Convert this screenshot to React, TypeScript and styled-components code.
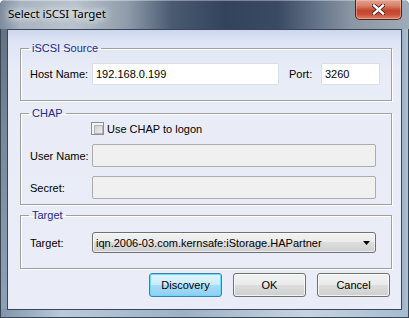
import React from "react";
import styled, { createGlobalStyle } from "styled-components";

const GlobalStyle = createGlobalStyle`
  html, body { margin: 0; padding: 0; background: #ffffff; }
  * { box-sizing: border-box; }
`;

const Window = styled.div`
  width: 409px;
  height: 318px;
  display: flex;
  flex-direction: column;
  border-radius: 5px 5px 0 0;
  overflow: hidden;
  box-shadow: inset 0 0 0 1px #3a4553;
  background:
    linear-gradient(90deg, #7f93a8, #b9cadb 15%, #9db1c5 45%, #c5d4e2 75%, #a6bbcf) bottom / 100% 9px no-repeat,
    linear-gradient(180deg, #5d6b7c 0, #75879a 40%, #8fa3b8 100%) left / 7px 100% no-repeat,
    linear-gradient(90deg, #8ca0b4 0, #9db1c4 calc(100% - 7px), #b2c4d6 100%);
`;

const TitleBar = styled.div`
  height: 29px;
  flex: none;
  display: flex;
  align-items: flex-start;
  justify-content: space-between;
  padding-left: 8px;
  background: linear-gradient(
    90deg,
    #7c8b9c 0,
    #a9b4c0 5%,
    #bac3cd 18%,
    #8f9cab 31%,
    #4a5a71 42%,
    #33435c 55%,
    #3a4a62 68%,
    #66758a 78%,
    #8a96a3 86%,
    #9eabb9 100%
  );
  box-shadow: inset 0 1px 0 rgba(255, 255, 255, 0.35);
`;

const Title = styled.span`
  padding-top: 6px;
  font-family: "Noto Sans", "Open Sans", sans-serif;
  font-size: 11.6px;
  line-height: 16px;
  letter-spacing: -0.1px;
  color: #000;
  text-shadow: 0 0 6px #fff, 0 0 10px rgba(255, 255, 255, 0.9), 0 0 14px rgba(255, 255, 255, 0.6);
`;

const CloseButton = styled.div`
  width: 47px;
  height: 20px;
  margin-right: 7px;
  display: flex;
  align-items: center;
  justify-content: center;
  border: 1px solid #4e241d;
  border-top: none;
  border-radius: 0 0 5px 5px;
  background: linear-gradient(180deg, #e2a393 0, #d7826c 30%, #c3452c 55%, #c84e35 75%, #e2836a 100%);
  box-shadow: inset 0 0 0 1px rgba(255, 200, 180, 0.45);
`;

const Client = styled.div`
  flex: 1;
  margin: 0 7px 8px 7px;
  border: 1px solid #3a4656;
  padding: 11px 9px 12px 12px;
  display: flex;
  flex-direction: column;
  background: linear-gradient(180deg, #ccd7ee 0, #dfe5f4 12px, #e8ecf7 40px, #eaedf7 100%);
  font-family: "Liberation Sans", Arial, sans-serif;
  font-size: 11px;
  color: #000;
`;

const Group = styled.fieldset<{ $gap?: number }>`
  margin: ${(p) => p.$gap ?? 0}px 0 0 0;
  padding: 0;
  min-width: 0;
  border: 1px solid #a0a0a0;
  box-shadow: inset 1px 1px 0 #ffffff, 1px 1px 0 #ffffff;
`;

const Legend = styled.legend`
  margin-left: 8px;
  padding: 0 3px;
  font-size: 11px;
  line-height: 15px;
  color: #212b8e;
`;

const Body = styled.div<{ $top: number; $bottom: number }>`
  display: flex;
  flex-direction: column;
  gap: 9px;
  padding: ${(p) => p.$top}px 15px ${(p) => p.$bottom}px 9px;
`;

const Row = styled.div`
  display: flex;
  align-items: center;
`;

const Label = styled.span<{ $w: number; $ml?: number }>`
  width: ${(p) => p.$w}px;
  margin-left: ${(p) => p.$ml ?? 0}px;
  flex: none;
  white-space: nowrap;
`;

const TextBox = styled.div<{ $w: number }>`
  width: ${(p) => p.$w}px;
  height: 22px;
  flex: none;
  display: flex;
  align-items: center;
  padding-left: 3px;
  background: #ffffff;
  border: 1px solid #dadee5;
  border-radius: 1px;
`;

const DisabledBox = styled.div`
  flex: 1;
  height: 23px;
  background: #f0f0f0;
  border: 1px solid #acacac;
  border-radius: 2px;
`;

const CheckRow = styled.label`
  display: flex;
  align-items: center;
  gap: 3px;
  height: 13px;
  padding-left: 61px;
`;

const CheckBox = styled.span`
  width: 13px;
  height: 13px;
  flex: none;
  border: 1px solid #8e8f8f;
  background: #f4f4f4;
  padding: 2px;
  display: block;
  &::after {
    content: "";
    display: block;
    width: 100%;
    height: 100%;
    border: 1px solid #b5b5b5;
    background: linear-gradient(135deg, #cfcfcf, #f0f0f0);
  }
`;

const Combo = styled.div`
  flex: 1;
  height: 21px;
  display: flex;
  align-items: center;
  justify-content: space-between;
  padding: 0 5px 0 3px;
  border: 1px solid #707070;
  border-radius: 3px;
  background: linear-gradient(180deg, #f2f2f2 0, #ebebeb 50%, #dddddd 50%, #cfcfcf 100%);
  box-shadow: inset 0 0 0 1px rgba(255, 255, 255, 0.6);
`;

const ButtonRow = styled.div`
  display: flex;
  justify-content: flex-end;
  gap: 11px;
  margin-top: 4px;
  padding-right: 2px;
`;

const Button = styled.button<{ $active?: boolean }>`
  width: 73px;
  height: 24px;
  padding: 0;
  font-family: "Liberation Sans", Arial, sans-serif;
  font-size: 11px;
  color: #000;
  border-radius: 3px;
  border: 1px solid ${(p) => (p.$active ? "#3c7fb1" : "#707070")};
  background: ${(p) =>
    p.$active
      ? "linear-gradient(180deg, #e3f4fd 0, #c9ebfc 50%, #a9dcf8 50%, #8fcdf1 100%)"
      : "linear-gradient(180deg, #f2f2f2 0, #ebebeb 50%, #dddddd 50%, #cfcfcf 100%)"};
  box-shadow: inset 0 0 0 1px ${(p) => (p.$active ? "rgba(96, 220, 255, 0.95)" : "rgba(255, 255, 255, 0.7)")};
`;

const CloseIcon = () => (
  <svg width="13" height="11" viewBox="0 0 13 11">
    <path d="M2 1.5 L11 9.5 M11 1.5 L2 9.5" stroke="#4a2018" strokeWidth="4.2" strokeLinecap="square" />
    <path d="M2 1.5 L11 9.5 M11 1.5 L2 9.5" stroke="#ffffff" strokeWidth="2.4" strokeLinecap="square" />
  </svg>
);

const Arrow = () => (
  <svg width="7" height="4" viewBox="0 0 7 4">
    <path d="M0 0 H7 L3.5 4 Z" fill="#000" />
  </svg>
);

export default function App() {
  return (
    <>
      <GlobalStyle />
      <Window>
        <TitleBar>
          <Title>Select iSCSI Target</Title>
          <CloseButton>
            <CloseIcon />
          </CloseButton>
        </TitleBar>
        <Client>
          <Group>
            <Legend>iSCSI Source</Legend>
            <Body $top={7} $bottom={15}>
              <Row>
                <Label $w={62}>Host Name:</Label>
                <TextBox $w={187}>192.168.0.199</TextBox>
                <Label $w={32} $ml={10}>Port:</Label>
                <TextBox $w={59}>3260</TextBox>
              </Row>
            </Body>
          </Group>
          <Group $gap={5}>
            <Legend>CHAP</Legend>
            <Body $top={1} $bottom={5}>
              <CheckRow>
                <CheckBox />
                <span>Use CHAP to logon</span>
              </CheckRow>
              <Row>
                <Label $w={62}>User Name:</Label>
                <DisabledBox />
              </Row>
              <Row>
                <Label $w={62}>Secret:</Label>
                <DisabledBox />
              </Row>
            </Body>
          </Group>
          <Group $gap={3}>
            <Legend>Target</Legend>
            <Body $top={9} $bottom={15}>
              <Row>
                <Label $w={62}>Target:</Label>
                <Combo>
                  <span>iqn.2006-03.com.kernsafe:iStorage.HAPartner</span>
                  <Arrow />
                </Combo>
              </Row>
            </Body>
          </Group>
          <ButtonRow>
            <Button $active>Discovery</Button>
            <Button>OK</Button>
            <Button>Cancel</Button>
          </ButtonRow>
        </Client>
      </Window>
    </>
  );
}
